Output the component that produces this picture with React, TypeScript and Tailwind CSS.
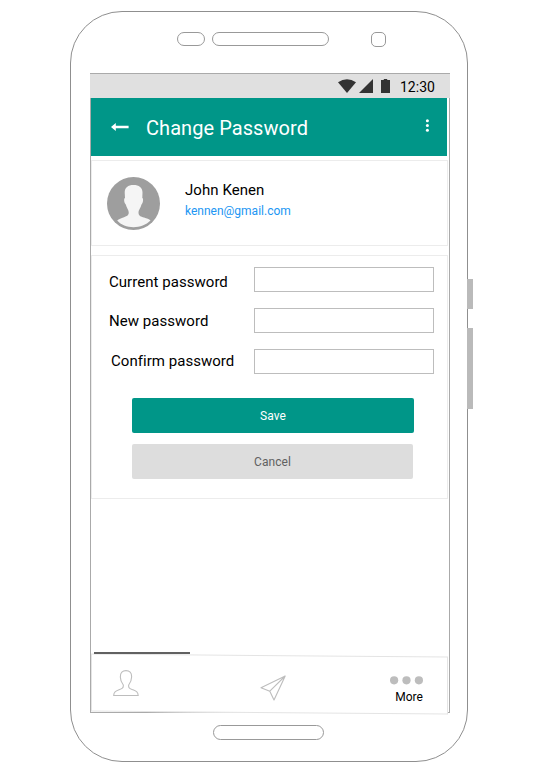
function StatusBar() {
  return (
    <div className="-ml-px flex h-[24px] w-[360px] shrink-0 items-center bg-[#e0e0e0] pl-[248px]">
      <svg className="h-[14px] w-[18px] shrink-0" viewBox="0 0 18 14">
        <path d="M0 3.2 Q9 -2.6 18 3.2 L9 14 Z" fill="#333" />
      </svg>
      <svg className="ml-[3px] h-[14px] w-[14px] shrink-0" viewBox="0 0 14 14">
        <path d="M14 0 V14 H0 Z" fill="#333" />
      </svg>
      <svg className="ml-2 h-[14px] w-[9px] shrink-0" viewBox="0 0 9 14">
        <path d="M0 .9 H2.8 V0 H6.2 V.9 H9 V14 H0 Z" fill="#333" />
      </svg>
      <span className="ml-[10px] mt-px text-[14px] leading-4 text-black">12:30</span>
    </div>
  );
}

function Header() {
  return (
    <header className="flex h-[58px] w-[356px] shrink-0 items-center bg-[#009688] text-white">
      <svg className="ml-5 h-[10px] w-[18px] shrink-0" viewBox="0 0 18 10">
        <path d="M0 5 L4.8 1 V3.7 H17.6 V6.3 H4.8 V9 Z" fill="#fff" />
      </svg>
      <h1 className="ml-[17px] mt-[2px] w-[180px] whitespace-nowrap text-[20px] leading-6 tracking-[0.06px]">Change Password</h1>
      <svg className="ml-[99px] mb-[4px] h-[13px] w-[4px] shrink-0" viewBox="0 0 4 13">
        <circle cx="2.4" cy="1.8" r="1.5" fill="#fff" />
        <circle cx="2.4" cy="6.5" r="1.5" fill="#fff" />
        <circle cx="2.4" cy="11.2" r="1.5" fill="#fff" />
      </svg>
    </header>
  );
}

function Profile() {
  return (
    <section className="mt-1 flex h-[86px] w-[357px] shrink-0 border border-[#ececec]">
      <svg className="ml-[15px] mt-4 h-[53px] w-[53px] shrink-0" viewBox="0 0 53 53">
        <circle cx="26.5" cy="26.5" r="26.5" fill="#9e9e9e" />
        <path
          d="M26.5 8 C32 8 35.5 10.5 35.5 15.5 L35.3 21 C36.8 21.5 36 26 34.5 27.5 C33.8 31 31.5 33 31.5 35 C31.3 39 34 39.5 37 40.5 C40 41.5 42 42 43.5 43.5 C39 48 33 50.2 26.5 50.2 C20 50.2 14 48 10.2 43.5 C12 42 14 41.3 17 40.2 C20 39 22 38.5 21.7 35 C21.7 33 19.5 31 18.8 27.5 C17.2 26 16.5 21.5 18 21 L17.7 15.5 C17.7 10.5 21 8 26.5 8 Z"
          fill="#f5f5f5"
        />
      </svg>
      <div className="ml-[25px] mt-[19px] flex flex-col">
        <span className="text-[15px] leading-5 tracking-[0.06px] text-black">John Kenen</span>
        <span className="mt-[3px] text-[12px] leading-4 text-[#2196f3]">kennen@gmail.com</span>
      </div>
    </section>
  );
}

function PasswordForm() {
  return (
    <form className="mt-[9px] flex h-[244px] w-[357px] shrink-0 flex-col border border-[#ececec] pl-[17px] pt-[11px] text-[15px] tracking-[0.04px] text-black">
      <div className="flex h-[41px]">
        <label htmlFor="current" className="w-[145px] pt-[5px] leading-5">Current password</label>
        <input id="current" type="password" className="h-[25px] w-[180px] border border-[#bdbdbd] bg-white" />
      </div>
      <div className="flex h-[41px]">
        <label htmlFor="new" className="w-[145px] pt-[3px] leading-5">New password</label>
        <input id="new" type="password" className="h-[25px] w-[180px] border border-[#bdbdbd] bg-white" />
      </div>
      <div className="flex h-[49px]">
        <label htmlFor="confirm" className="w-[145px] pl-[2px] pt-[2px] leading-5">Confirm password</label>
        <input id="confirm" type="password" className="h-[25px] w-[180px] border border-[#bdbdbd] bg-white" />
      </div>
      <button type="button" className="ml-[23px] h-[35px] w-[282px] shrink-0 rounded-[2px] bg-[#009688] text-[12px] leading-4 text-white">
        Save
      </button>
      <button type="button" className="ml-[23px] mt-[11px] h-[35px] w-[281px] shrink-0 rounded-[2px] bg-[#dddddd] text-[12px] leading-4 text-[#616161]">
        Cancel
      </button>
    </form>
  );
}

function BottomNav() {
  return (
    <nav className="relative mt-[153px] flex h-[62px] w-[357px] shrink-0 items-start">
      <div className="absolute left-0 top-[3px] h-[58px] w-[357px] skew-y-[0.45deg] border border-[#e4e4e4] bg-white" />
      <div className="absolute left-[3px] top-0 h-[2px] w-[96px] bg-[#616161]" />
      <svg className="relative ml-[22px] mt-[18px] h-[26px] w-[26px] shrink-0" viewBox="0 0 26 26" fill="none" stroke="#bdbdbd" strokeWidth="1.1">
        <path d="M13 .6 C16.5 .6 18.7 2.5 18.6 6.5 C18.8 10 17.6 12.4 15.7 15 C15.2 18.2 17 18.7 20 19.8 C23.5 21.2 25 22 25.2 25.5 H.7 C.8 22 2.5 21.2 6 19.8 C9 18.7 10.6 18 10.3 15 C8.3 12.4 7.1 10 7.4 6.5 C7.3 2.5 9.5 .6 13 .6 Z" />
      </svg>
      <svg className="relative ml-[121px] mt-[23px] h-[26px] w-[26px] shrink-0" viewBox="0 0 26 26" fill="none" stroke="#bdbdbd" strokeWidth="1.1" strokeLinejoin="round">
        <path d="M25.2 1 L1 12.7 L9.8 16.2 L14 25 Z M25.2 1 L9.8 16.2" />
      </svg>
      <div className="relative ml-[104px] mt-[24px] flex w-[33px] flex-col items-center">
        <svg className="h-[9px] w-[33px]" viewBox="0 0 33 9" fill="#bdbdbd">
          <circle cx="4.1" cy="4.3" r="4.1" />
          <circle cx="16.5" cy="4.3" r="4.1" />
          <circle cx="28.9" cy="4.3" r="4.1" />
        </svg>
        <span className="ml-[5px] mt-[4px] text-[12px] leading-4 text-black">More</span>
      </div>
    </nav>
  );
}

export default function App() {
  return (
    <main className="flex h-[779px] w-[534px] overflow-hidden bg-white pl-[70px] pt-[11px] font-['Roboto',sans-serif]">
      <div className="flex h-[751px] w-[398px] shrink-0 flex-col rounded-[52px] border border-[#8f8f8f]">
        <div className="ml-[106px] mt-[20px] flex shrink-0">
          <div className="h-[14px] w-[28px] rounded-full border border-[#999]" />
          <div className="ml-[7px] h-[14px] w-[117px] rounded-full border border-[#999]" />
          <div className="ml-[42px] h-[15px] w-[15px] rounded-[5px] border border-[#999]" />
        </div>
        <div className="ml-[19px] mt-[26px] flex h-[640px] w-[360px] shrink-0 flex-col border border-[#aaa]">
          <StatusBar />
          <Header />
          <Profile />
          <PasswordForm />
          <BottomNav />
        </div>
        <div className="ml-[142px] mt-[12px] h-[15px] w-[111px] shrink-0 rounded-full border border-[#999]" />
      </div>
      <div className="-ml-px flex flex-col pt-[268px]">
        <div className="h-[30px] w-[6px] bg-[#bababa]" />
        <div className="mt-[19px] h-[81px] w-[6px] bg-[#bababa]" />
      </div>
    </main>
  );
}
